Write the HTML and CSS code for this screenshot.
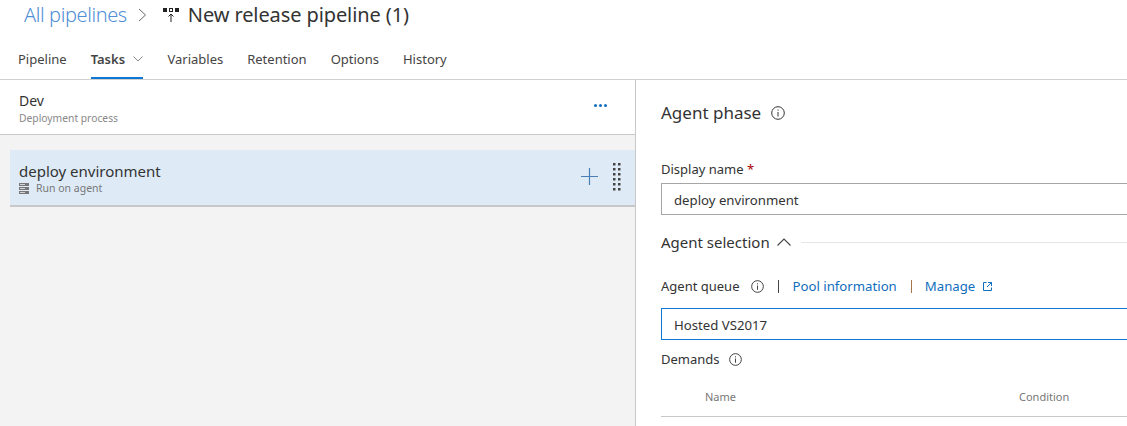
FILE: index.html
```html
<!DOCTYPE html>
<html lang="en">
<head>
    <meta charset="UTF-8">
    <title>New release pipeline (1)</title>
    <link rel="stylesheet" href="styles.css">
</head>
<body>
    <header class="top">
        <div class="crumbs">
            <a class="crumb-link">All pipelines</a>
            <svg class="crumb-sep" width="9" height="14" viewBox="0 0 9 14"><path d="M1 1l6.5 6L1 13" fill="none" stroke="#666" stroke-width="1"/></svg>
            <svg class="crumb-icon" width="16" height="16" viewBox="0 0 16 16">
                <path d="M0 1h4v4H0zM6 1h4v4H6zM12 1h4v4h-4z" fill="#222"/>
                <path d="M7 2h2v2H7z" fill="#fff"/>
                <path d="M8 15V7M5.500 9.500L8 7l2.500 2.500" fill="none" stroke="#222" stroke-width="1"/>
            </svg>
            <span class="crumb-title">New release pipeline (1)</span>
        </div>
        <nav class="tabs">
            <a class="tab">Pipeline</a>
            <a class="tab active">Tasks
                <svg width="10" height="6" viewBox="0 0 10 6"><path d="M.5.500L5 5l4.500-4.500" fill="none" stroke="#888" stroke-width="1"/></svg>
            </a>
            <a class="tab">Variables</a>
            <a class="tab">Retention</a>
            <a class="tab">Options</a>
            <a class="tab">History</a>
        </nav>
    </header>
    <div class="main">
        <section class="left">
            <div class="stage">
                <div>
                    <div class="stage-name">Dev</div>
                    <div class="stage-sub">Deployment process</div>
                </div>
                <svg class="dots" width="13" height="3" viewBox="0 0 13 3"><circle cx="1.500" cy="1.500" r="1.500" fill="#106ebe"/><circle cx="6.500" cy="1.500" r="1.500" fill="#106ebe"/><circle cx="11.500" cy="1.500" r="1.500" fill="#106ebe"/></svg>
            </div>
            <div class="phase">
                <div>
                    <div class="phase-name">deploy environment</div>
                    <div class="phase-sub">
                        <svg width="10" height="11" viewBox="0 0 10 11"><path d="M0 0h10v3H0zM0 4h10v3H0zM0 8h10v3H0z" fill="#777"/><path d="M1 1.500h5M1 5.500h5M1 9.500h5" stroke="#d4d4d4" stroke-width="1"/></svg>
                        Run on agent
                    </div>
                </div>
                <div class="phase-tools">
                    <svg width="17" height="17" viewBox="0 0 17 17"><path d="M8.500 0v17M0 8.500h17" stroke="#4a7fb5" stroke-width="1.200"/></svg>
                    <svg width="8" height="28" viewBox="0 0 8 28"><path d="M0 0h2.500v2.500H0zM5 0h2.500v2.500H5zM0 5h2.500v2.500H0zM5 5h2.500v2.500H5zM0 10h2.500v2.500H0zM5 10h2.500v2.500H5zM0 15h2.500v2.500H0zM5 15h2.500v2.500H5zM0 20h2.500v2.500H0zM5 20h2.500v2.500H5zM0 25h2.500v2.500H0zM5 25h2.500v2.500H5z" fill="#444"/></svg>
                </div>
            </div>
        </section>
        <section class="right">
            <h2 class="phase-title">Agent phase
                <svg class="info big" viewBox="0 0 14 14"><circle cx="7" cy="7" r="6.300" fill="none" stroke="#333"/><path d="M7 6v4.500M7 3.500v1.200" stroke="#333"/></svg>
            </h2>
            <label class="field-label name-label">Display name <span class="req">*</span></label>
            <div class="input">deploy environment</div>
            <div class="group">
                <span class="group-title">Agent selection</span>
                <svg width="14" height="8" viewBox="0 0 14 8"><path d="M.5 7.500L7 1l6.500 6.500" fill="none" stroke="#444" stroke-width="1.100"/></svg>
                <span class="group-line"></span>
            </div>
            <div class="queue-row">
                <span class="field-label">Agent queue</span>
                <svg class="info" viewBox="0 0 14 14"><circle cx="7" cy="7" r="6.300" fill="none" stroke="#333"/><path d="M7 6v4.500M7 3.500v1.200" stroke="#333"/></svg>
                <span class="bar"></span>
                <a class="link">Pool information</a>
                <span class="bar bar-orange"></span>
                <a class="link">Manage</a>
                <svg class="ext" width="9" height="9" viewBox="0 0 9 9"><path d="M3.500.5H.5v8h8v-3M5 .5h3.500V4M8.500.5L4 5" fill="none" stroke="#106ebe"/></svg>
            </div>
            <div class="input focused">Hosted VS2017</div>
            <div class="demands">
                <span class="field-label">Demands</span>
                <svg class="info" viewBox="0 0 14 14"><circle cx="7" cy="7" r="6.300" fill="none" stroke="#333"/><path d="M7 6v4.500M7 3.500v1.200" stroke="#333"/></svg>
            </div>
            <div class="table-head">
                <span class="col-name">Name</span>
                <span>Condition</span>
            </div>
        </section>
    </div>
</body>
</html>
```

FILE: styles.css
```css
* {
    box-sizing: border-box;
}
html, body {
    height: 100%;
}
body {
    margin: 0;
    overflow: hidden;
    display: flex;
    flex-direction: column;
    font-family: "Noto Sans", "Open Sans", sans-serif;
    color: #333;
    background: #fff;
}
.top {
    height: 80px;
    flex: none;
    border-bottom: 1px solid #d0d0d0;
}
.crumbs {
    height: 29px;
    padding-left: 24px;
    display: flex;
    align-items: center;
    font-size: 20px;
}
.crumb-link {
    color: #4f8fd6;
    font-weight: 300;
    letter-spacing: -0.4px;
}
.crumb-sep {
    margin-left: 11px;
}
.crumb-icon {
    margin-left: 16px;
}
.crumb-title {
    margin-left: 9px;
    color: #333;
    letter-spacing: -0.1px;
}
.tabs {
    height: 50px;
    padding-left: 18px;
    display: flex;
    gap: 24px;
    font-size: 13px;
}
.tab {
    height: 50px;
    padding-top: 21px;
    color: #444;
}
.tab.active {
    font-weight: 600;
    border-bottom: 2px solid #0f78d4;
}
.tab.active svg {
    margin-left: 5px;
    vertical-align: 2px;
}
.main {
    flex: 1;
    display: flex;
    min-height: 0;
}
.left {
    width: 636px;
    flex: none;
    background: #f3f3f3;
    border-right: 1px solid #c8c8c8;
}
.stage {
    height: 55px;
    padding: 11px 28px 0 19px;
    display: flex;
    justify-content: space-between;
    background: #fff;
    border-bottom: 1px solid #c8c8c8;
}
.stage-name {
    font-size: 14px;
    line-height: 19px;
}
.stage-sub {
    font-size: 10.300px;
    line-height: 16px;
    color: #888;
}
.dots {
    margin-top: 13px;
}
.phase {
    height: 57px;
    margin: 15px 0 0 10px;
    padding: 11px 14px 0 9px;
    display: flex;
    justify-content: space-between;
    background: #deebf7;
    border-bottom: 2px solid #c8c8c8;
}
.phase-name {
    font-size: 15px;
    line-height: 20px;
    color: #333;
}
.phase-sub {
    font-size: 10.500px;
    line-height: 15px;
    color: #777;
    display: flex;
    align-items: center;
    gap: 7px;
}
.phase-tools {
    display: flex;
    align-items: center;
    gap: 15px;
    margin-top: -2px;
    padding-bottom: 11px;
}
.right {
    flex: 1;
    padding: 0 0 0 25px;
    min-width: 0;
}
.phase-title {
    margin: 20px 0 0;
    font-size: 17px;
    line-height: 25px;
    font-weight: 400;
    display: flex;
    align-items: center;
    gap: 10px;
}
.info {
    width: 13px;
    height: 13px;
}
.info.big {
    width: 14px;
    height: 14px;
}
.field-label {
    font-size: 13px;
    color: #333;
}
.name-label {
    display: block;
    margin-top: 34px;
    line-height: 20px;
}
.req {
    color: #a80000;
}
.input {
    height: 32px;
    margin-top: 4px;
    margin-right: -4px;
    padding-left: 12px;
    border: 1px solid #a6a6a6;
    font-size: 13.200px;
    line-height: 32px;
    color: #333;
}
.input.focused {
    margin-top: 0;
    border-color: #0f78d4;
}
.group {
    margin-top: 14px;
    height: 26px;
    display: flex;
    align-items: center;
    gap: 7px;
}
.group-title {
    font-size: 15px;
}
.group-line {
    flex: 1;
    height: 1px;
    margin-left: 3px;
    background: #e6e6e6;
}
.queue-row {
    margin-top: 19px;
    height: 24px;
    margin-bottom: 10px;
    display: flex;
    align-items: center;
}
.queue-row .info {
    margin-left: 12px;
}
.bar {
    width: 1px;
    height: 13px;
    margin: 0 13px 0 14px;
    background: #444;
}
.bar-orange {
    background: #a5764a;
}
.link {
    font-size: 13.200px;
    color: #106ebe;
}
.ext {
    margin-left: 8px;
}
.demands {
    margin-top: 7px;
    height: 24px;
    display: flex;
    align-items: center;
    gap: 9px;
}
.table-head {
    height: 46px;
    padding-top: 18px;
    display: flex;
    font-size: 11px;
    color: #777;
    border-bottom: 1px solid #c8c8c8;
    margin-right: -4px;
}
.col-name {
    margin-left: 44px;
    width: 314px;
}
```
